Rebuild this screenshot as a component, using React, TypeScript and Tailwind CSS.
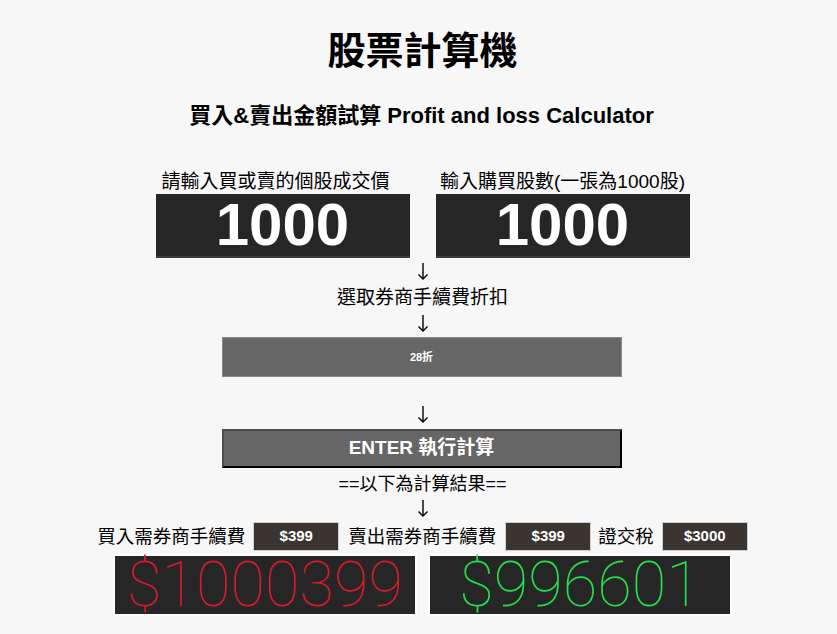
import React from "react";

const font = { fontFamily: '"Liberation Sans", "Noto Sans CJK TC", sans-serif' };

function Arrow({ className = "" }: { className?: string }) {
  return (
    <div className={"flex h-[20px] items-center justify-center " + className}>
      <svg width="12" height="18" viewBox="0 0 12 18" fill="none" stroke="#000" strokeWidth="1.4">
        <path d="M6 1v16" />
        <path d="M1.5 12.5L6 17l4.5-4.5" />
      </svg>
    </div>
  );
}

function FeeBox({ value }: { value: string }) {
  return (
    <div className="flex h-[29px] w-[86px] items-center justify-center border border-[#cfcfcf] bg-[#3a3531] text-[15px] font-bold text-white">
      {value}
    </div>
  );
}

export default function App() {
  const [price] = React.useState("1000");
  const [shares] = React.useState("1000");

  return (
    <div className="flex h-[634px] w-full flex-col items-center bg-[#f7f7f7] text-black" style={font}>
      <h1 className="mt-[31px] ml-[8px] text-[38px] font-bold leading-[40px]">股票計算機</h1>
      <h2 className="mt-[33px] ml-[6px] text-[22px] font-bold leading-[24px]">
        買入&賣出金額試算 Profit and loss Calculator
      </h2>

      <div className="mt-[43px] ml-[8px] flex gap-[26px]">
        <div className="flex w-[254px] flex-col items-center">
          <label className="mr-[14px] text-[19px] leading-[22px]">請輸入買或賣的個股成交價</label>
          <div className="mt-[1px] flex h-[64px] w-[254px] items-center justify-center border-b-2 border-[#3f3a35] bg-[#262626] text-[60px] font-bold text-white">
            {price}
          </div>
        </div>
        <div className="flex w-[254px] flex-col items-center">
          <label className="text-[19px] leading-[22px]">輸入購買股數(一張為1000股)</label>
          <div className="mt-[1px] flex h-[64px] w-[254px] items-center justify-center border-b-2 border-[#3f3a35] bg-[#262626] text-[60px] font-bold text-white">
            {shares}
          </div>
        </div>
      </div>

      <Arrow className="mt-[3px] ml-[8px]" />
      <div className="mt-[6px] ml-[8px] text-[19px] leading-[22px]">選取券商手續費折扣</div>
      <Arrow className="mt-[4px] ml-[8px]" />
      <div className="mt-[4px] ml-[6px] flex h-[40px] w-[400px] items-center justify-center border border-[#8a8a8a] bg-[#666666] text-[11px] font-bold text-white">
        28折
      </div>

      <Arrow className="mt-[27px] ml-[8px]" />
      <button className="mt-[5px] ml-[6px] flex h-[39px] w-[400px] items-center justify-center border-2 border-t-[#4d4d4d] border-l-[#4d4d4d] border-b-black border-r-black bg-[#666666] text-[19px] font-bold text-white">
        ENTER 執行計算
      </button>
      <div className="mt-[6px] ml-[8px] text-[18px] leading-[20px]">==以下為計算結果==</div>
      <Arrow className="mt-[4px] ml-[8px]" />

      <div className="mt-[4px] ml-[8px] flex items-center">
        <span className="text-[18.5px] leading-[22px]">買入需券商手續費</span>
        <div className="ml-[8px]">
          <FeeBox value="$399" />
        </div>
        <span className="ml-[9px] text-[18.5px] leading-[22px]">賣出需券商手續費</span>
        <div className="ml-[9px]">
          <FeeBox value="$399" />
        </div>
        <span className="ml-[7px] text-[18.5px] leading-[22px]">證交稅</span>
        <div className="ml-[8px]">
          <FeeBox value="$3000" />
        </div>
      </div>

      <div className="mt-[3px] ml-[8px] flex gap-[11px]">
        <div
          className="flex h-[62px] w-[304px] items-center justify-center border-2 border-white bg-[#262626] text-[63px] font-thin text-[#d81b2c]"
          style={{ fontFamily: "Roboto, sans-serif" }}
        >
          $1000399
        </div>
        <div
          className="flex h-[62px] w-[304px] items-center justify-center border-2 border-white bg-[#262626] text-[63px] font-thin text-[#22e04a]"
          style={{ fontFamily: "Roboto, sans-serif" }}
        >
          $996601
        </div>
      </div>
    </div>
  );
}
